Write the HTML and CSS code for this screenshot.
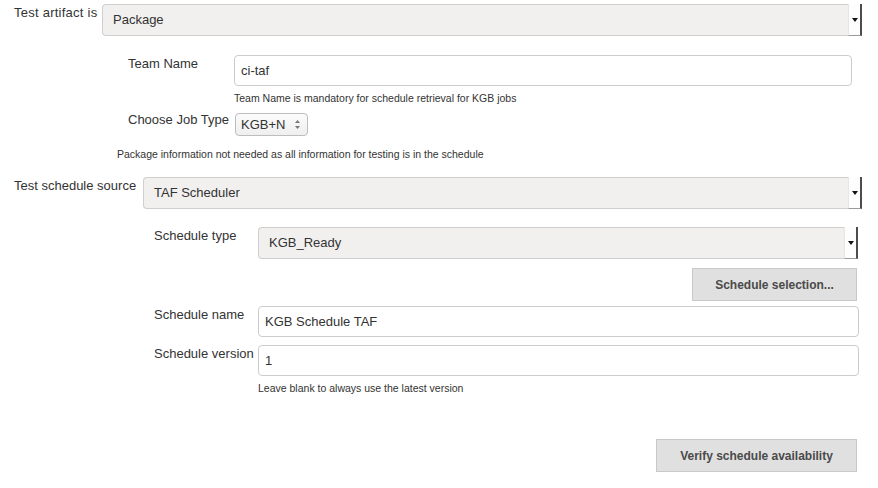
FILE: index.html
```html
<!DOCTYPE html>
<html>
<head>
<meta charset="utf-8">
<link rel="stylesheet" href="styles.css">
</head>
<body>
<div class="form">
  <div class="row top-row">
    <label class="label artifact-label">Test artifact is</label>
    <div class="select">
      <span class="value">Package</span>
      <span class="arrow"><span class="tri"></span></span>
    </div>
  </div>

  <div class="sub team">
    <div class="row team-row">
      <label class="label team-label">Team Name</label>
      <div class="input">ci-taf</div>
    </div>
    <div class="help team-help">Team Name is mandatory for schedule retrieval for KGB jobs</div>
    <div class="row job-row">
      <label class="label team-label">Choose Job Type</label>
      <div class="spin">
        <span>KGB+N</span>
        <svg class="spin-icon" width="7" height="11" viewBox="0 0 7 11"><path d="M3.5 1 L6 4 L1 4 Z" fill="#777"/><path d="M3.5 10 L6 7 L1 7 Z" fill="#777"/></svg>
      </div>
    </div>
  </div>

  <div class="help pkg-help">Package information not needed as all information for testing is in the schedule</div>

  <div class="row source-row">
    <label class="label source-label">Test schedule source</label>
    <div class="select">
      <span class="value">TAF Scheduler</span>
      <span class="arrow"><span class="tri"></span></span>
    </div>
  </div>

  <div class="sub sched">
    <div class="row type-row">
      <label class="label sched-label">Schedule type</label>
      <div class="select">
        <span class="value">KGB_Ready</span>
        <span class="arrow"><span class="tri"></span></span>
      </div>
    </div>
    <div class="btn-row sel-row">
      <button class="btn sel-btn">Schedule selection...</button>
    </div>
    <div class="row name-row">
      <label class="label sched-label">Schedule name</label>
      <div class="input">KGB Schedule TAF</div>
    </div>
    <div class="row version-row">
      <label class="label sched-label">Schedule version</label>
      <div class="input">1</div>
    </div>
    <div class="help version-help">Leave blank to always use the latest version</div>
  </div>

  <div class="btn-row verify-row">
    <button class="btn verify-btn">Verify schedule availability</button>
  </div>
</div>
</body>
</html>
```

FILE: styles.css
```css
html, body {
  margin: 0;
  padding: 0;
  background: #fff;
}
body {
  font-family: "Liberation Sans", Arial, sans-serif;
  font-size: 13px;
  color: #333;
  width: 878px;
  height: 488px;
  overflow: hidden;
}
.form {
  display: flex;
  flex-direction: column;
}
.row {
  display: flex;
  align-items: flex-start;
}
.label {
  line-height: 18px;
  color: #333;
  white-space: nowrap;
  flex: none;
}
.top-row {
  margin-top: 4px;
  padding-left: 14px;
  padding-right: 16px;
}
.artifact-label {
  width: 88px;
  letter-spacing: 0.25px;
}
.source-label {
  width: 129px;
}
.source-row {
  margin-top: 15px;
  padding-left: 14px;
  padding-right: 16px;
}
.select {
  flex: 1;
  display: flex;
  height: 32px;
  box-sizing: border-box;
  border: 1px solid #cfcfcf;
  border-right: none;
  border-radius: 4px 0 0 4px;
  background: #f1f0ee;
}
.select .value {
  flex: 1;
  line-height: 30px;
  padding-left: 10px;
  color: #333;
}
.select .arrow {
  width: 11px;
  margin-top: -1px;
  margin-bottom: -1px;
  background: #fdfdfd;
  border-left: 1px solid #e6e6e6;
  border-right: 2px solid #4c4c4c;
  border-bottom: 1px solid #9a9a9a;
  display: flex;
  align-items: center;
  justify-content: center;
}
.select .tri {
  width: 0;
  height: 0;
  border-left: 3px solid transparent;
  border-right: 3px solid transparent;
  border-top: 4px solid #111;
  margin-top: 1px;
}
.sub.team {
  padding-left: 128px;
  padding-right: 26px;
  margin-top: 19px;
}
.team-label {
  width: 106px;
}
.input {
  flex: 1;
  height: 31px;
  box-sizing: border-box;
  border: 1px solid #cccccc;
  border-radius: 4px;
  background: #fff;
  line-height: 29px;
  padding-left: 6px;
  color: #333;
}
.help {
  font-size: 10.5px;
  line-height: 15px;
  color: #333;
}
.team-help {
  margin-top: 5px;
  padding-left: 106px;
}
.job-row {
  margin-top: 5px;
}
.spin {
  margin-left: 1px;
  width: 73px;
  height: 23px;
  box-sizing: border-box;
  border: 1px solid #bdbdbd;
  border-radius: 4px;
  background: linear-gradient(#fbfbfb, #efefef);
  display: flex;
  align-items: center;
  justify-content: space-between;
  padding: 0 6px 0 5px;
  margin-top: 2px;
  font-size: 13px;
}
.pkg-help {
  padding-left: 117px;
  margin-top: 11px;
}
.sub.sched {
  padding-left: 154px;
  display: flex;
  flex-direction: column;
}
.sched-label {
  width: 104px;
}
.type-row {
  margin-top: 18px;
  padding-right: 20px;
}
.btn-row {
  display: flex;
  justify-content: flex-end;
  padding-right: 21px;
}
.sel-row {
  margin-top: 9px;
}
.btn {
  font-family: "Liberation Sans", Arial, sans-serif;
  font-size: 12px;
  font-weight: bold;
  color: #4a4a4a;
  background: #e0e0e0;
  border: 1px solid #c9c9c9;
  border-radius: 0;
  height: 33px;
  padding: 0;
  margin: 0;
}
.sel-btn {
  width: 165px;
}
.name-row {
  margin-top: 5px;
  padding-right: 19px;
}
.version-row {
  margin-top: 8px;
  padding-right: 19px;
}
.version-help {
  padding-left: 104px;
  margin-top: 5px;
}
.verify-row {
  margin-top: 43px;
}
.verify-btn {
  width: 201px;
}
```
